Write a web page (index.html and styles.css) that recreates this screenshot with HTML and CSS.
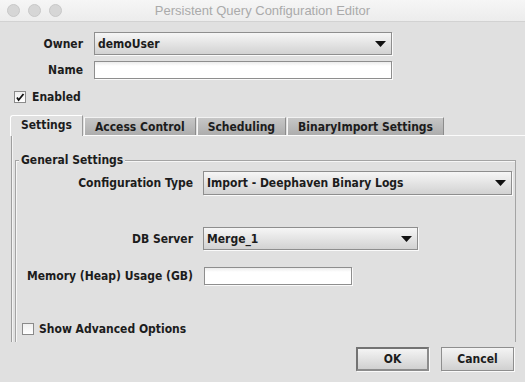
FILE: index.html
```html
<!DOCTYPE html>
<html lang="en">
<head>
    <meta charset="UTF-8">
    <meta name="viewport" content="width=device-width, initial-scale=1.0">
    <title>Persistent Query Configuration Editor</title>
    <link rel="stylesheet" href="styles.css">
</head>
<body>
    <div class="window">
        <div class="titlebar">
            <div class="lights">
                <span class="light"></span>
                <span class="light"></span>
                <span class="light"></span>
            </div>
            <div class="title">Persistent Query Configuration Editor</div>
            <div></div>
        </div>

        <div class="top-form">
            <label class="top-label">Owner</label>
            <div class="combo">
                <span>demoUser</span>
                <svg class="arrow" width="11" height="6" viewBox="0 0 11 6"><polygon points="0,0 11,0 5.5,6" fill="#111"/></svg>
            </div>
            <label class="top-label">Name</label>
            <input class="text-field" type="text">
        </div>

        <div class="check-row enabled-row">
            <span class="checkbox">
                <svg width="10" height="10" viewBox="0 0 10 10"><path d="M2 5.5 L3.6 8 L8.5 2" fill="none" stroke="#111" stroke-width="1.8"/></svg>
            </span>
            <span>Enabled</span>
        </div>

        <div class="tabs">
            <div class="tab selected">Settings</div>
            <div class="tab">Access Control</div>
            <div class="tab">Scheduling</div>
            <div class="tab">BinaryImport Settings</div>
        </div>

        <div class="tab-panel">
            <div class="group">
                <div class="legend">General Settings</div>
                <div class="field-row first-row">
                    <label class="field-label">Configuration Type</label>
                    <div class="combo combo-wide">
                        <span>Import - Deephaven Binary Logs</span>
                        <svg class="arrow" width="11" height="6" viewBox="0 0 11 6"><polygon points="0,0 11,0 5.5,6" fill="#111"/></svg>
                    </div>
                </div>
                <div class="field-row server-row">
                    <label class="field-label">DB Server</label>
                    <div class="combo combo-mid">
                        <span>Merge_1</span>
                        <svg class="arrow" width="11" height="6" viewBox="0 0 11 6"><polygon points="0,0 11,0 5.5,6" fill="#111"/></svg>
                    </div>
                </div>
                <div class="field-row memory-row">
                    <label class="field-label">Memory (Heap) Usage (GB)</label>
                    <input class="text-field memory-field" type="text">
                </div>
                <div class="check-row advanced-row">
                    <span class="checkbox"></span>
                    <span>Show Advanced Options</span>
                </div>
            </div>
        </div>

        <div class="buttons">
            <button class="btn default">OK</button>
            <button class="btn">Cancel</button>
        </div>
    </div>
</body>
</html>
```

FILE: styles.css
```css
body {
    margin: 0;
}
.window {
    width: 525px;
    height: 382px;
    overflow: hidden;
    background-color: #e0e0e0;
    font-family: "DejaVu Sans Condensed", "DejaVu Sans", sans-serif;
    font-stretch: condensed;
    font-weight: bold;
    font-size: 12px;
    color: #1c1c1c;
}
.titlebar {
    height: 21px;
    display: grid;
    grid-template-columns: 1fr auto 1fr;
    align-items: center;
    background: linear-gradient(#f6f6f6, #ececec);
    border-bottom: 1px solid #d2d2d2;
}
.lights {
    display: flex;
    gap: 8px;
    padding-left: 7px;
}
.light {
    width: 11px;
    height: 11px;
    border-radius: 50%;
    background-color: #d6d6d6;
    border: 0.5px solid #c8c8c8;
}
.title {
    font-family: "Liberation Sans", Arial, sans-serif;
    font-stretch: normal;
    font-weight: normal;
    font-size: 13px;
    color: #aaaaaa;
}
.top-form {
    display: grid;
    grid-template-columns: 83px 298px;
    grid-template-rows: 23px 18px;
    column-gap: 11px;
    row-gap: 6px;
    align-items: center;
    padding-top: 10px;
}
.top-label,
.field-label {
    text-align: right;
}
.combo {
    height: 23px;
    box-sizing: border-box;
    display: flex;
    align-items: center;
    justify-content: space-between;
    padding: 0 5px 0 3px;
    border: 1px solid #8e8e8e;
    box-shadow: 1px 1px 0 #fafafa;
    background: linear-gradient(#f6f6f6, #e6e6e6 45%, #d2d2d2);
}
.text-field {
    height: 18px;
    box-sizing: border-box;
    margin: 0;
    border: 1px solid #8e8e8e;
    box-shadow: 1px 1px 0 #fafafa;
    background: linear-gradient(#ececec, #ffffff 4px);
}
.check-row {
    display: flex;
    align-items: center;
    gap: 6px;
    line-height: 14px;
}
.enabled-row {
    margin-top: 11px;
    padding-left: 14px;
}
.checkbox {
    width: 12px;
    height: 12px;
    box-sizing: border-box;
    display: flex;
    align-items: center;
    justify-content: center;
    border: 1px solid #8a8a8a;
    background: linear-gradient(#f0f0f0, #ffffff);
}
.tabs {
    display: flex;
    align-items: flex-end;
    gap: 1px;
    margin-top: 11px;
    padding-left: 10px;
    height: 20px;
}
.tab {
    height: 18px;
    box-sizing: border-box;
    display: flex;
    align-items: center;
    padding: 0 10px;
    border-top: 1px solid #f2f2f2;
    border-left: 1px solid #f8f8f8;
    border-right: 1px solid #8c8c8c;
    background: linear-gradient(#c6c6c6, #adadad);
}
.tab.selected {
    height: 21px;
    margin-bottom: -1px;
    padding-bottom: 2px;
    border-top-left-radius: 3px;
    border-color: #ffffff;
    border-right-color: #9a9a9a;
    background: #e0e0e0;
    position: relative;
}
.tab-panel {
    height: 206px;
    margin-left: 11px;
    overflow: hidden;
    border-top: 1px solid #fbfbfb;
    border-left: 1px solid #9e9e9e;
    box-shadow: inset 1px 0 0 #f4f4f4;
    padding-left: 3px;
}
.group {
    margin-top: 24px;
    width: 499px;
    height: 300px;
    border: 1px solid #a4a4a4;
    box-shadow: inset 1px 1px 0 #f6f6f6;
}
.legend {
    width: max-content;
    margin: -8px 0 0 3px;
    padding: 0 2px;
    line-height: 14px;
    background-color: #e0e0e0;
}
.field-row {
    display: flex;
    align-items: center;
    gap: 10px;
}
.field-label {
    width: 177px;
    flex: none;
}
.first-row {
    margin-top: 4px;
}
.combo-wide {
    width: 309px;
    height: 24px;
}
.combo-mid {
    width: 215px;
}
.server-row {
    margin-top: 32px;
}
.memory-row {
    margin-top: 17px;
}
.memory-field {
    width: 148px;
    margin-left: 1px;
}
.advanced-row {
    margin-top: 37px;
    padding-left: 6px;
    gap: 5px;
}
.buttons {
    display: flex;
    justify-content: flex-end;
    gap: 12px;
    padding: 5px 11px 0 0;
}
.btn {
    width: 73px;
    height: 24px;
    box-sizing: border-box;
    font: inherit;
    color: #1c1c1c;
    border: 1px solid #8e8e8e;
    box-shadow: 1px 1px 0 #fafafa;
    background: linear-gradient(#f4f4f4, #e4e4e4 45%, #d0d0d0);
}
.btn.default {
    border: 2px solid;
    border-color: #737373 #8c8c8c #8c8c8c #737373;
}
```
